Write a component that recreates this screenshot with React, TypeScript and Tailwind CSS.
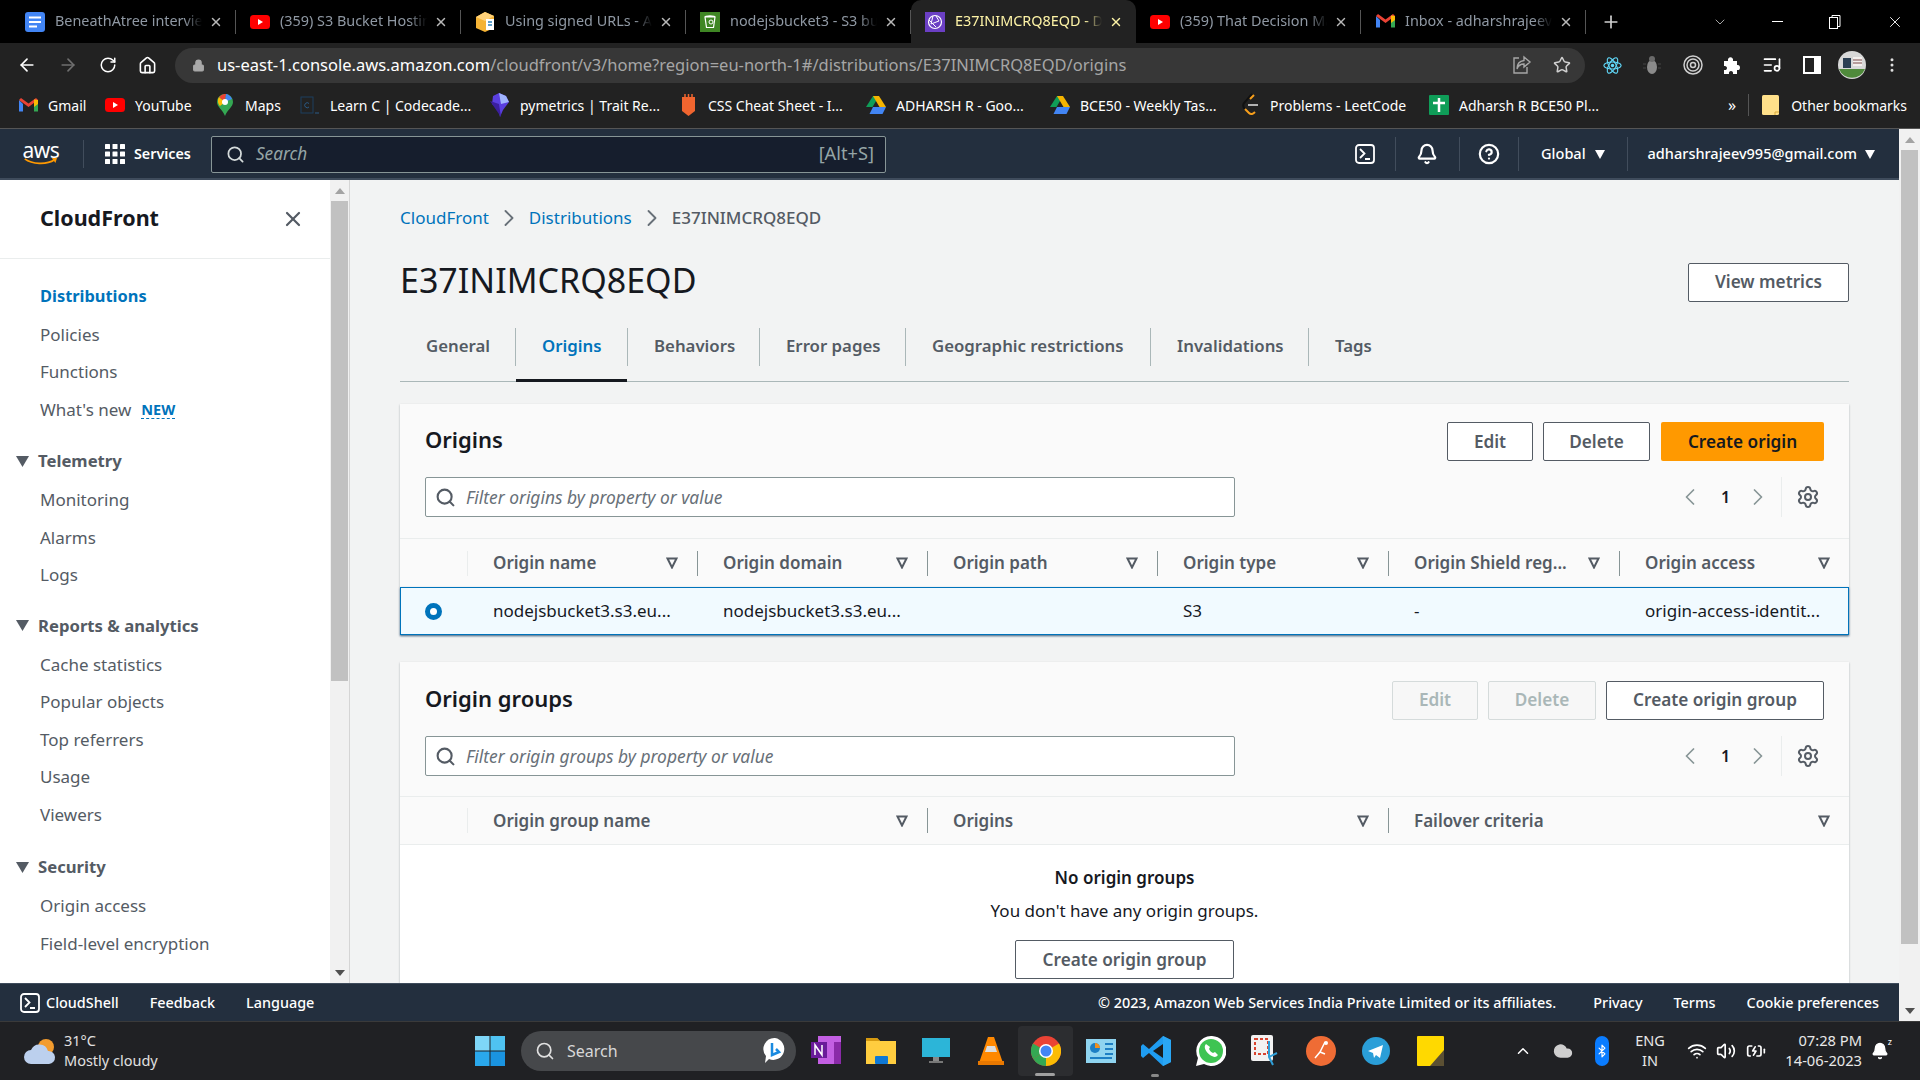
import React from "react";
import { ArrowLeft, ArrowRight, RotateCw, Home, Lock, Star, Bell, CircleHelp, X, ChevronLeft, ChevronRight, Plus, ChevronDown, ChevronUp, Search, Settings, Wifi, Volume2, Bluetooth, Cloud, BatteryCharging, MoreVertical, ListMusic } from "lucide-react";

const YT = () => (<svg width="20" height="14" viewBox="0 0 20 14"><rect width="20" height="14" rx="3.5" fill="#f00" /><path d="M8 4l5 3-5 3z" fill="#fff" /></svg>);
const GDoc = () => (<svg width="20" height="20" viewBox="0 0 20 20"><rect width="20" height="20" rx="3" fill="#4285f4" /><path d="M4 5.5h12M4 10h12M4 14.5h8" stroke="#fff" strokeWidth="2" /></svg>);
const Gmail = () => (<svg width="19" height="15" viewBox="0 0 19 15"><path d="M0 2v11.500h4V6z" fill="#4285f4" /><path d="M19 2v11.500h-4V6z" fill="#34a853" /><path d="M0 2l9.500 7L19 2l-2-2-7.500 5.500L2 0z" fill="#ea4335" /><path d="M15 1.500L19 2v4l-4 3z" fill="#fbbc04" /></svg>);
const S3Box = () => (<svg width="20" height="20" viewBox="0 0 20 20"><path d="M1 5l9-5 9 4v12l-9 4-9-4z" fill="#f5b335" /><path d="M1 5l9 4 9-5-9-4z" fill="#ffd27a" /><rect x="11" y="7" width="8" height="11" fill="#fff" /><path d="M13 10h4M13 13h4" stroke="#2a80b9" strokeWidth="1.500" /></svg>);
const S3Bucket = () => (<svg width="20" height="20" viewBox="0 0 20 20"><rect width="20" height="20" fill="#3f8624" /><path d="M5 5h10l-1.500 10.500h-7zM5 5c0-1.500 10-1.500 10 0" stroke="#fff" strokeWidth="1.200" fill="none" /><circle cx="11" cy="10" r="2" stroke="#fff" fill="none" /></svg>);
const CF = () => (<svg width="20" height="20" viewBox="0 0 20 20"><rect width="20" height="20" fill="#6b3fc4" /><circle cx="10" cy="10" r="6.500" stroke="#fff" fill="none" strokeWidth="1.200" /><path d="M4 8l7 7M8 4l-2 8 8-3-3-5" stroke="#fff" fill="none" /></svg>);
const Drive = () => (<svg width="20" height="18" viewBox="0 0 20 18"><path d="M7 0h6l-6.500 11H0z" fill="#0f9d58" /><path d="M7 0h6l7 11h-6.500z" fill="#f4b400" /><path d="M3.500 18L7 11h13l-3.500 7z" fill="#4285f4" /></svg>);
const Maps = () => (<svg width="16" height="22" viewBox="0 0 16 22"><path d="M8 0a8 8 0 0 1 8 8c0 5-6 8-8 14-2-6-8-9-8-14a8 8 0 0 1 8-8z" fill="#34a853" /><path d="M2 3l6 5-5 4C1 10 0 6 2 3z" fill="#fbbc04" /><path d="M2 3a8 8 0 0 1 7-3L8 8z" fill="#ea4335" /><path d="M9 0a8 8 0 0 1 6 5L8 8z" fill="#4285f4" /><circle cx="8" cy="8" r="3" fill="#fff" /></svg>);
const Cc = () => (<svg width="20" height="18" viewBox="0 0 20 18"><rect x="1" y="1" width="12" height="16" stroke="#1d3f5e" fill="none" /><path d="M9 7.500a2.500 2.500 0 1 0 0 3.500" stroke="#2a5a86" fill="none" /><path d="M15 17h4" stroke="#2a5a86" /></svg>);
const Pym = () => (<svg width="20" height="24" viewBox="0 0 20 24"><path d="M3 3l6-3 7 3 3 6-6 8-3 7-2-8-6-5z" fill="#5a3fe0" /><path d="M9 0l7 3 3 6-8 2z" fill="#a0b4ff" /><path d="M0 8l9 3 2 13z" fill="#3b1f9f" /></svg>);
const CssIc = () => (<svg width="17" height="22" viewBox="0 0 17 22"><path d="M2 3h13v14l-6.500 5L2 17z" fill="#f0652f" /><path d="M5 3V0M8.500 3V0M12 3V0" stroke="#f0652f" strokeWidth="1.500" /></svg>);
const Leet = () => (<svg width="18" height="24" viewBox="0 0 18 24"><path d="M11 1L3 10c-2 3 0 5 1 6" stroke="#111" strokeWidth="2" fill="none" /><path d="M4 16l4 4c2 2 4 1 6-1" stroke="#f89f1b" strokeWidth="2" fill="none" /><path d="M7 12h10" stroke="#b3b3b3" strokeWidth="2" /><path d="M9 6l4-4" stroke="#f89f1b" strokeWidth="2" /></svg>);
const Sheet = () => (<svg width="20" height="20" viewBox="0 0 20 20"><rect width="20" height="20" rx="1" fill="#0f9d58" /><path d="M10 3v14M4 8h12" stroke="#fff" strokeWidth="2.500" /></svg>);
const Folder = () => (<svg width="17" height="20" viewBox="0 0 17 20"><rect width="17" height="20" rx="1.500" fill="#ffe08a" /><path d="M13 20v-3h4" stroke="#d9a93a" fill="none" /></svg>);
const ShareIc = () => (<svg width="20" height="20" viewBox="0 0 20 20" fill="none" stroke="#a6a6a6" strokeWidth="1.400"><path d="M7 3H2v15h13v-6" /><path d="M12 2l6 5-6 5V9c-4 0-6 2-7 5 0-5 3-8 7-8.500z" /></svg>);
const React2 = () => (<svg width="19" height="19" viewBox="-11 -11 22 22"><g stroke="#61dafb" fill="none" strokeWidth="1.300"><ellipse rx="10" ry="4" /><ellipse rx="10" ry="4" transform="rotate(60)" /><ellipse rx="10" ry="4" transform="rotate(120)" /></g><circle r="2" fill="#61dafb" /></svg>);
const Bug = () => (<svg width="18" height="20" viewBox="0 0 18 20"><ellipse cx="9" cy="12" rx="5" ry="7" fill="#8b8b8b" /><circle cx="9" cy="4" r="3" fill="#6a6a6a" /><path d="M0 9h3M0 13h3M15 9h3M15 13h3" stroke="#444" /></svg>);
const Target = () => (<svg width="20" height="20" viewBox="0 0 20 20" fill="none" stroke="#cfcfcf"><circle cx="10" cy="10" r="9" strokeWidth="1.500" /><circle cx="10" cy="10" r="6" strokeWidth="1.500" /><circle cx="10" cy="10" r="2.500" strokeWidth="1.500" /></svg>);
const Side = () => (<svg width="18" height="18" viewBox="0 0 18 18"><rect width="18" height="18" fill="#fff" /><rect x="2" y="2" width="9" height="14" fill="#222" /></svg>);
const Avatar = () => (<svg width="28" height="28" viewBox="0 0 28 28"><circle cx="14" cy="14" r="14" fill="#d8d8d8" /><path d="M1 18h26a14 14 0 0 1-26 0z" fill="#4f8a3b" /><rect x="5" y="7" width="8" height="10" fill="#2a3e52" /><rect x="15" y="6" width="9" height="9" fill="#f4f0ee" /><path d="M15 9h9M15 12h9" stroke="#7a4a4a" /></svg>);
const PuzzleF = () => (<svg width="18" height="18" viewBox="0 0 18 18"><path d="M1 5h4c-1-5 6-5 5 0h4v4c4-1 4 6 0 5v4h-4c1-4-5-4-4 0H1v-4c4 1 4-5 0-4z" fill="#fff" /></svg>);
const Shell = ({ s = 20 }: { s?: number }) => (<svg width={s} height={s} viewBox="0 0 20 20" fill="none" stroke="#fff" strokeWidth="1.800"><rect x="1" y="1" width="18" height="18" rx="3" /><path d="M5 5l4.500 4.500L5 14M10 15h5" /></svg>);
const Grid = () => (<svg width="20" height="20" viewBox="0 0 20 20" fill="#fff">{[0, 7.5, 15].flatMap((x) => [0, 7.5, 15].map((y) => <rect key={`${x}-${y}`} x={x} y={y} width="5" height="5" rx="0.5" />))}</svg>);
const Aws = () => (
  <div className="flex flex-col items-center w-[38px] h-[26px] relative">
    <span className="text-white text-[21px] leading-[18px] font-['Noto_Sans'] tracking-[-0.5px]">aws</span>
    <svg width="38" height="10" viewBox="0 0 38 10" className="-mt-[1px]"><path d="M1 1c8 6 24 7 33 1" stroke="#f90" strokeWidth="2" fill="none" /><path d="M31 0l6-.5-2 6z" fill="#f90" /></svg>
  </div>
);
const Tri = ({ c = "#fff", w = 10, h = 9 }: { c?: string; w?: number; h?: number }) => (<svg width={w} height={h} viewBox="0 0 10 9" preserveAspectRatio="none"><path d="M0 0h10L5 9z" fill={c} /></svg>);
const FilterTri = () => (<svg width="12" height="12" viewBox="0 0 12 12"><path d="M1.500 1.500h9L6 10.500z" fill="none" stroke="#545b64" strokeWidth="2" /></svg>);

const tabs: { icon: React.ReactNode; t: string; active?: boolean }[] = [
  { icon: <GDoc />, t: "BeneathAtree interview" },
  { icon: <YT />, t: "(359) S3 Bucket Hosting" },
  { icon: <S3Box />, t: "Using signed URLs - Amazon" },
  { icon: <S3Bucket />, t: "nodejsbucket3 - S3 bucket" },
  { icon: <CF />, t: "E37INIMCRQ8EQD - Distribution", active: true },
  { icon: <YT />, t: "(359) That Decision Made" },
  { icon: <Gmail />, t: "Inbox - adharshrajeev995" },
];

const ChromeTab = ({ icon, t, active }: { icon: React.ReactNode; t: string; active?: boolean }) => (
  <div className={`w-[225px] h-[43px] flex items-center pl-[14px] shrink-0 ${active ? "bg-[#222222] rounded-t-[10px]" : ""}`}>
    <div className="w-5 flex justify-center shrink-0">{icon}</div>
    <div className={`ml-[10px] mb-[2px] w-[147px] text-[14.4px] whitespace-nowrap overflow-hidden [mask-image:linear-gradient(to_right,black_88%,transparent)] ${active ? "text-[#fdf3a6]" : "text-[#8f98a3]"}`}>{t}</div>
    <X size={14} strokeWidth={2.5} className={`ml-[7px] shrink-0 ${active ? "text-[#fdf3a6]" : "text-[#b8b8b8]"}`} />
    {!active && <div className="ml-[12px] w-px h-[24px] bg-[#555]" />}
  </div>
);

const bookmarks: { icon: React.ReactNode; t: string; w: string }[] = [
  { icon: <Gmail />, t: "Gmail", w: "w-[87px]" },
  { icon: <YT />, t: "YouTube", w: "w-[110px]" },
  { icon: <Maps />, t: "Maps", w: "w-[85px]" },
  { icon: <Cc />, t: "Learn C | Codecade...", w: "w-[190px]" },
  { icon: <Pym />, t: "pymetrics | Trait Re...", w: "w-[188px]" },
  { icon: <CssIc />, t: "CSS Cheat Sheet - I...", w: "w-[188px]" },
  { icon: <Drive />, t: "ADHARSH R - Goo...", w: "w-[184px]" },
  { icon: <Drive />, t: "BCE50 - Weekly Tas...", w: "w-[190px]" },
  { icon: <Leet />, t: "Problems - LeetCode", w: "w-[189px]" },
  { icon: <Sheet />, t: "Adharsh R BCE50 Pl...", w: "w-[290px]" },
];

const NavItem = ({ t, active, badge }: { t: string; active?: boolean; badge?: boolean }) => (
  <div className={`h-[37.5px] flex items-center pl-[40px] ${active ? "text-[16.4px] font-bold text-[#0073bb]" : "text-[17px] text-[#545b64]"}`}>
    {t}
    {badge && <span className="ml-[10px] text-[14.5px] font-bold text-[#0073bb] border-b border-dashed border-[#0073bb] leading-[18px]">NEW</span>}
  </div>
);
const NavHead = ({ t, cls }: { t: string; cls: string }) => (
  <div className={`flex items-center h-[40px] pl-[16px] text-[16.7px] font-bold text-[#545b64] ${cls}`}>
    <Tri c="#545b64" w={13} h={11} />
    <span className="ml-[9px]">{t}</span>
  </div>
);

const Scrollbar = ({ thumb }: { thumb: string }) => (
  <div className="w-full h-full bg-[#f1f1f1] flex flex-col items-center">
    <div className="h-[21px] flex items-center justify-center shrink-0"><svg width="10" height="6" viewBox="0 0 10 6"><path d="M5 0l5 6H0z" fill="#a3a3a3" /></svg></div>
    <div className={`w-[17px] bg-[#c1c1c1] ${thumb}`} />
    <div className="flex-1" />
    <div className="h-[21px] flex items-center justify-center shrink-0"><svg width="10" height="6" viewBox="0 0 10 6"><path d="M5 6l5-6H0z" fill="#505050" /></svg></div>
  </div>
);

const Btn = ({ t, w, kind = "normal" }: { t: string; w: string; kind?: "normal" | "primary" | "disabled" }) => (
  <div className={`h-[39px] ${w} rounded-[2px] flex items-center justify-center text-[17.2px] font-semibold shrink-0 ${kind === "primary" ? "bg-[#ff9900] text-[#16191f]" : kind === "disabled" ? "bg-[#f7f7f7] border border-[#d5dbdb] text-[#aab7b8]" : "bg-white border border-[#545b64] text-[#545b64]"}`}>{t}</div>
);

const FilterRow = ({ placeholder }: { placeholder: string }) => (
  <div className="flex items-center px-[25px]">
    <div className="w-[810px] h-[40px] bg-white border border-[#879596] rounded-[2px] flex items-center pl-[9px]">
      <Search size={21} strokeWidth={2.4} className="text-[#545b64]" />
      <span className="ml-[10px] text-[17.4px] italic text-[#687078]">{placeholder}</span>
    </div>
    <div className="flex-1" />
    <ChevronLeft size={28} strokeWidth={1.5} className="text-[#879596] mr-[17px]" />
    <span className="text-[16px] font-semibold text-[#16191f] w-[8px] text-center">1</span>
    <ChevronRight size={28} strokeWidth={1.5} className="text-[#879596] ml-[15px]" />
    <div className="w-px h-[40px] bg-[#eaeded] ml-[9px]" />
    <Settings size={24} strokeWidth={2} className="text-[#545b64] ml-[14px] mr-[4px]" />
  </div>
);

const Th = ({ t, w, sep = true }: { t: string; w: string; sep?: boolean }) => (
  <div className={`${w} shrink-0 flex items-center h-[25px] pl-[25px] ${sep ? "border-r border-[#879596]" : ""}`}>
    <span className="flex-1 text-[17px] font-semibold text-[#545b64] whitespace-nowrap">{t}</span>
    <span className="mr-[19px] flex"><FilterTri /></span>
  </div>
);

const Td = ({ t, w }: { t: string; w: string }) => (
  <div className={`${w} shrink-0 pl-[25px] text-[17px] text-[#16191f] whitespace-nowrap`}>{t}</div>
);

const taskIcons: React.ReactNode[] = [
  <svg key="on" width="30" height="30" viewBox="0 0 30 30"><rect x="7" width="23" height="28" fill="#c35fe3" /><rect x="23" y="6" width="7" height="22" fill="#8a2aa8" /><rect y="6" width="16" height="16" fill="#6a1b9a" /><path d="M4 19V9l7 10V9" stroke="#fff" strokeWidth="1.500" fill="none" /></svg>,
  <svg key="ex" width="30" height="30" viewBox="0 0 30 30"><path d="M0 2h11l3 3h16v23H0z" fill="#ffcd3f" /><path d="M0 2h11l3 3H0z" fill="#d69a10" /><rect x="9" y="20" width="13" height="8" rx="1" fill="#0f78d4" /></svg>,
  <svg key="mo" width="28" height="26" viewBox="0 0 28 26"><rect width="28" height="19" fill="#2cb5d8" /><rect x="11" y="19" width="6" height="4" fill="#888" /><rect x="7" y="23" width="14" height="2" fill="#777" /></svg>,
  <svg key="vl" width="26" height="28" viewBox="0 0 26 28"><path d="M10 0h6l9 26H1z" fill="#ff8800" /><path d="M9 9h8l2 6H7z" fill="#ddd" /><path d="M0 24h26v4H0z" fill="#e87800" /></svg>,
  <svg key="ch" width="30" height="30" viewBox="0 0 30 30"><circle cx="15" cy="15" r="15" fill="#ea4335" /><path d="M15 15L2 22.500A15 15 0 0 1 2 7.500z" fill="#34a853" /><path d="M15 15l-13 7.500A15 15 0 0 0 15 30z" fill="#34a853" /><path d="M15 15l13-7.500A15 15 0 0 1 15 30z" fill="#fbbc04" /><circle cx="15" cy="15" r="7" fill="#fff" /><circle cx="15" cy="15" r="5.500" fill="#4285f4" /></svg>,
  <svg key="cp" width="30" height="24" viewBox="0 0 30 24"><rect width="30" height="24" fill="#8fd4f0" /><circle cx="9" cy="9" r="5" fill="#1d7fc4" /><path d="M9 4v5h5a5 5 0 0 0-5-5z" fill="#f09020" /><path d="M19 5h8M19 10h8M19 15h8M4 19h22" stroke="#1d7fc4" strokeWidth="2" /></svg>,
  <svg key="vs" width="30" height="30" viewBox="0 0 30 30"><path d="M22 0l8 4v22l-8 4-14-13-6 5-2-2v-10l2-2 6 5z" fill="#1f9cf0" /><path d="M22 8v14l-10-7z" fill="#1c1c1c" /><path d="M22 0v30l8-4V4z" fill="#2aa7f5" /></svg>,
  <svg key="wa" width="30" height="30" viewBox="0 0 30 30"><path d="M15 0a15 15 0 1 1-7 28L0 30l2-8A15 15 0 0 1 15 0z" fill="#fff" /><circle cx="15" cy="15" r="12" fill="#3ec452" /><path d="M10 8c-3 3 0 8 4 11 3 2 6 3 8 0l-3-3-2 1c-2-1-3-2-4-4l1-2z" fill="#fff" /></svg>,
  <svg key="sn" width="30" height="32" viewBox="0 0 30 32"><rect width="22" height="26" rx="2" fill="#f2f2f2" /><rect x="4" y="4" width="13" height="15" fill="none" stroke="#d8432f" strokeWidth="2" strokeDasharray="3 2" /><path d="M18 6v16l4 8M18 22l8-4" stroke="#2f9fd8" strokeWidth="2" fill="none" /></svg>,
  <svg key="pm" width="30" height="30" viewBox="0 0 30 30"><circle cx="15" cy="15" r="15" fill="#ef6c35" /><path d="M19 6l-5 10-5 6M14 16l5 2" stroke="#fff" strokeWidth="1.500" fill="none" /><circle cx="20" cy="7" r="2" fill="#fff" /></svg>,
  <svg key="tg" width="28" height="28" viewBox="0 0 28 28"><circle cx="14" cy="14" r="14" fill="#2a9ed8" /><path d="M6 14l15-6-3 13-4-3-2 3-1-5z" fill="#fff" /></svg>,
  <svg key="st" width="27" height="30" viewBox="0 0 27 30"><rect width="27" height="30" rx="1" fill="#ffd900" /><path d="M27 14v16H13z" fill="#5b5033" /></svg>,
];

export default function App() {
  return (
    <div className="w-[1920px] h-[1080px] overflow-hidden flex flex-col font-['Noto_Sans',sans-serif] bg-[#f2f3f3]">
      {/* tabs */}
      <div className="h-[43px] bg-black flex items-center pl-[11px] shrink-0">
        {tabs.map((x, i) => <ChromeTab key={i} icon={x.icon} t={x.t} active={x.active} />)}
        <Plus size={20} strokeWidth={2} className="text-[#d0d0d0] ml-[15px]" />
        <ChevronDown size={16} strokeWidth={1.2} className="text-[#cfcfcf] ml-[91px]" />
        <div className="w-[11px] h-px bg-white ml-[44px]" />
        <svg width="14" height="14" viewBox="0 0 14 14" fill="none" stroke="#fff" className="ml-[44px]"><rect x="2.5" y="2.5" width="8" height="11" /><path d="M5 2.500V.500h8v11h-2" /></svg>
        <X size={18} strokeWidth={1.2} className="text-white ml-[45px]" />
      </div>
      {/* toolbar */}
      <div className="h-[44px] bg-[#222222] flex items-center shrink-0">
        <ArrowLeft size={20} strokeWidth={2} className="text-white ml-[17px]" />
        <ArrowRight size={20} strokeWidth={2} className="text-[#6f6f6f] ml-[21px]" />
        <RotateCw size={18} strokeWidth={2} className="text-white ml-[21px]" />
        <Home size={19} strokeWidth={2} className="text-white ml-[21px]" />
        <div className="ml-[18px] w-[1410px] h-[35px] bg-[#373737] rounded-full flex items-center pl-[17px]">
          <Lock size={13} fill="#a8a8a8" className="text-[#a8a8a8]" />
          <span className="ml-[12px] text-[16.5px] text-[#a6a6a6] whitespace-nowrap"><span className="text-white">us-east-1.console.aws.amazon.com</span>/cloudfront/v3/home?region=eu-north-1#/distributions/E37INIMCRQ8EQD/origins</span>
          <div className="flex-1" />
          <ShareIc />
          <Star size={18} strokeWidth={2} className="text-[#d0d0d0] ml-[21px] mr-[14px]" />
        </div>
        <div className="w-[17px]" />
        <div className="w-[20px] flex justify-center"><React2 /></div>
        <div className="w-[20px] flex justify-center ml-[20px]"><Bug /></div>
        <div className="w-[20px] flex justify-center ml-[21px]"><Target /></div>
        <div className="w-[20px] flex justify-center ml-[19px]"><PuzzleF /></div>
        <div className="w-[20px] flex justify-center ml-[20px]"><ListMusic size={20} className="text-white" /></div>
        <div className="w-[20px] flex justify-center ml-[20px]"><Side /></div>
        <div className="w-[28px] flex justify-center ml-[16px]"><Avatar /></div>
        <MoreVertical size={18} className="text-[#e0e0e0] ml-[17px]" />
      </div>
      {/* bookmarks */}
      <div className="h-[42px] bg-[#222222] border-b border-[#555] flex items-center pl-[18px] pb-[5px] shrink-0">
        {bookmarks.map((b, i) => (
          <div key={i} className={`${b.w} flex items-center shrink-0`}>
            <div className="w-5 flex justify-center shrink-0">{b.icon}</div>
            <span className="ml-[10px] text-[14px] text-white whitespace-nowrap">{b.t}</span>
          </div>
        ))}
        <span className="text-white text-[16px] ml-[9px]">»</span>
        <div className="w-px h-[22px] bg-[#555] ml-[12px]" />
        <div className="ml-[13px]"><Folder /></div>
        <span className="ml-[12px] text-[14px] text-white whitespace-nowrap">Other bookmarks</span>
      </div>
      {/* page */}
      <div className="h-[892px] flex shrink-0">
        <div className="w-[1899px] flex flex-col shrink-0">
          {/* aws nav */}
          <div className="h-[51px] bg-[#232f3e] border-b-2 border-[#3f4c5c] flex items-center pt-[1px] shrink-0 text-white">
            <div className="ml-[22px]"><Aws /></div>
            <div className="w-px h-[28px] bg-[#414d5c] ml-[23px]" />
            <div className="ml-[21px]"><Grid /></div>
            <span className="ml-[9px] text-[14.3px] font-semibold">Services</span>
            <div className="ml-[20px] w-[675px] h-[37px] bg-[#161e2d] border border-[#879596] rounded-[2px] flex items-center pl-[14px] pr-[11px]">
              <Search size={19} strokeWidth={2.2} className="text-[#d5dbdb]" />
              <span className="ml-[11px] italic text-[#95a5a6] text-[17.2px]">Search</span>
              <div className="flex-1" />
              <span className="text-[#95a5a6] text-[18.2px]">[Alt+S]</span>
            </div>
            <div className="flex-1" />
            <Shell />
            <div className="w-px h-[34px] bg-[#414d5c] ml-[20px]" />
            <Bell size={22} strokeWidth={2.4} className="ml-[20px]" />
            <div className="w-px h-[34px] bg-[#414d5c] ml-[21px]" />
            <CircleHelp size={22} strokeWidth={2.4} className="ml-[18px]" />
            <div className="w-px h-[34px] bg-[#414d5c] ml-[18px]" />
            <span className="ml-[22px] text-[14.5px] font-medium">Global</span>
            <span className="ml-[9px]"><Tri /></span>
            <div className="w-px h-[34px] bg-[#414d5c] ml-[22px]" />
            <span className="ml-[20px] text-[14.5px] font-medium">adharshrajeev995@gmail.com</span>
            <span className="ml-[8px] mr-[24px]"><Tri /></span>
          </div>
          {/* body */}
          <div className="h-[803px] flex overflow-hidden shrink-0">
            <div className="w-[330px] bg-white shrink-0 flex flex-col overflow-hidden">
              <div className="h-[79px] border-b border-[#eaeded] flex items-center pl-[40px] pr-[25px] shrink-0">
                <span className="text-[21.5px] font-bold text-[#16191f] flex-1 mb-[2px]">CloudFront</span>
                <X size={24} strokeWidth={2.2} className="text-[#545b64]" />
              </div>
              <div className="pt-[19px]">
                <NavItem t="Distributions" active />
                <NavItem t="Policies" />
                <NavItem t="Functions" />
                <NavItem t="What's new" badge />
                <NavHead t="Telemetry" cls="mt-[13px]" />
                <NavItem t="Monitoring" />
                <NavItem t="Alarms" />
                <NavItem t="Logs" />
                <NavHead t="Reports & analytics" cls="mt-[12px]" />
                <NavItem t="Cache statistics" />
                <NavItem t="Popular objects" />
                <NavItem t="Top referrers" />
                <NavItem t="Usage" />
                <NavItem t="Viewers" />
                <NavHead t="Security" cls="mt-[14px]" />
                <NavItem t="Origin access" />
                <NavItem t="Field-level encryption" />
              </div>
            </div>
            <div className="w-[20px] shrink-0 border-r border-[#d5d5d5]"><Scrollbar thumb="h-[480px]" /></div>
            <div className="flex-1 pl-[50px] pr-[50px] flex flex-col min-w-0">
              <div className="h-[76px] flex items-center text-[17px] shrink-0">
                <span className="text-[#0073bb]">CloudFront</span>
                <ChevronRight size={28} strokeWidth={1.6} className="text-[#687078] mx-[6px]" />
                <span className="text-[#0073bb]">Distributions</span>
                <ChevronRight size={28} strokeWidth={1.6} className="text-[#687078] mx-[6px]" />
                <span className="text-[#545b64] font-medium">E37INIMCRQ8EQD</span>
              </div>
              <div className="h-[52px] flex items-center justify-between shrink-0">
                <span className="text-[34px] text-[#16191f] leading-[40px] mb-[5px]">E37INIMCRQ8EQD</span>
                <Btn t="View metrics" w="w-[161px]" />
              </div>
              {/* tabs */}
              <div className="mt-[20px] h-[54px] border-b border-[#aab7b8] flex items-start shrink-0 relative">
                {[
                  { t: "General", w: "w-[116px]" },
                  { t: "Origins", w: "w-[112px]", a: true },
                  { t: "Behaviors", w: "w-[132px]" },
                  { t: "Error pages", w: "w-[146px]" },
                  { t: "Geographic restrictions", w: "w-[245px]" },
                  { t: "Invalidations", w: "w-[158px]" },
                  { t: "Tags", w: "w-[80px]", last: true },
                ].map((x, i) => (
                  <div key={i} className={`${x.w} h-[38px] flex items-center pl-[26px] shrink-0 relative ${x.last ? "" : "border-r border-[#aab7b8]"}`}>
                    <span className={`text-[16.8px] font-semibold whitespace-nowrap mb-[2px] ${x.a ? "text-[#0073bb]" : "text-[#545b64]"}`}>{x.t}</span>
                    {x.a && <div className="absolute left-0 right-0 top-[51px] h-[3px] bg-[#16191f]" />}
                  </div>
                ))}
              </div>
              {/* card 1 */}
              <div className="mt-[22px] bg-[#fafafa] shadow-[0_1px_2px_rgba(0,28,36,0.3)] shrink-0">
                <div className="h-[73px] flex items-center px-[25px] pt-[2px]">
                  <span className="text-[22px] font-semibold text-[#16191f] flex-1 mb-[4px]">Origins</span>
                  <Btn t="Edit" w="w-[86px]" />
                  <div className="w-[10px]" />
                  <Btn t="Delete" w="w-[107px]" />
                  <div className="w-[11px]" />
                  <Btn t="Create origin" w="w-[163px]" kind="primary" />
                </div>
                <FilterRow placeholder="Filter origins by property or value" />
                <div className="h-[21px]" />
                <div className="h-[49px] border-t border-[#eaeded] flex items-center">
                  <div className="w-[68px] h-[25px] border-r border-[#eaeded] shrink-0" />
                  <Th t="Origin name" w="w-[230px]" />
                  <Th t="Origin domain" w="w-[230px]" />
                  <Th t="Origin path" w="w-[230px]" />
                  <Th t="Origin type" w="w-[231px]" />
                  <Th t="Origin Shield reg..." w="w-[231px]" />
                  <Th t="Origin access" w="w-[229px]" sep={false} />
                </div>
                <div className="h-[48px] bg-[#f1faff] border border-[#0073bb] shadow-[0_1px_2px_rgba(0,60,110,0.6)] flex items-center">
                  <div className="w-[67px] shrink-0 pl-[24px]"><div className="w-[17px] h-[17px] rounded-full border-[5px] border-[#0073bb] bg-white" /></div>
                  <Td t="nodejsbucket3.s3.eu..." w="w-[230px]" />
                  <Td t="nodejsbucket3.s3.eu..." w="w-[230px]" />
                  <Td t="" w="w-[230px]" />
                  <Td t="S3" w="w-[231px]" />
                  <Td t="-" w="w-[231px]" />
                  <Td t="origin-access-identit..." w="w-[228px]" />
                </div>
              </div>
              {/* card 2 */}
              <div className="mt-[27px] bg-white shadow-[0_1px_2px_rgba(0,28,36,0.3)] pb-[40px] shrink-0">
                <div className="bg-[#fafafa]">
                  <div className="h-[74px] flex items-center px-[25px] pt-[2px]">
                    <span className="text-[22px] font-semibold text-[#16191f] flex-1 mb-[4px]">Origin groups</span>
                    <Btn t="Edit" w="w-[86px]" kind="disabled" />
                    <div className="w-[10px]" />
                    <Btn t="Delete" w="w-[108px]" kind="disabled" />
                    <div className="w-[10px]" />
                    <Btn t="Create origin group" w="w-[218px]" />
                  </div>
                  <FilterRow placeholder="Filter origin groups by property or value" />
                  <div className="h-[20px]" />
                  <div className="h-[49px] border-y border-[#eaeded] flex items-center">
                    <div className="w-[68px] h-[25px] border-r border-[#eaeded] shrink-0" />
                    <Th t="Origin group name" w="w-[460px]" />
                    <Th t="Origins" w="w-[461px]" />
                    <Th t="Failover criteria" w="w-[460px]" sep={false} />
                  </div>
                </div>
                <div className="flex flex-col items-center pt-[21px]">
                  <span className="text-[17px] font-semibold text-[#16191f] leading-[24px]">No origin groups</span>
                  <span className="text-[17px] text-[#16191f] leading-[24px] mt-[9px]">You don't have any origin groups.</span>
                  <div className="mt-[17px]"><Btn t="Create origin group" w="w-[219px]" /></div>
                </div>
              </div>
            </div>
          </div>
          {/* footer */}
          <div className="h-[38px] bg-[#232f3e] border-t border-[#3f4c5c] flex items-center text-white text-[14.4px] font-medium shrink-0">
            <div className="ml-[20px]"><Shell /></div>
            <span className="ml-[6px]">CloudShell</span>
            <span className="ml-[31px]">Feedback</span>
            <span className="ml-[31px]">Language</span>
            <div className="flex-1" />
            <span>© 2023, Amazon Web Services India Private Limited or its affiliates.</span>
            <span className="ml-[37px]">Privacy</span>
            <span className="ml-[31px]">Terms</span>
            <span className="ml-[31px] mr-[20px]">Cookie preferences</span>
          </div>
        </div>
        <div className="flex-1"><Scrollbar thumb="h-[794px]" /></div>
      </div>
      {/* taskbar */}
      <div className="h-[59px] bg-[#202124] border-t border-[#3a3a3a] flex items-center text-white shrink-0">
        <svg width="34" height="30" viewBox="0 0 34 30" className="ml-[23px]"><circle cx="23" cy="11" r="8" fill="#f39c2e" /><path d="M8 28a7 7 0 0 1 0-14 9 9 0 0 1 17 1 6.500 6.500 0 0 1 1 13z" fill="#bcd0ee" /></svg>
        <div className="ml-[7px] mb-[2px] w-[120px] flex flex-col text-[14.5px] leading-[20px] text-[#e0e0e0]">
          <span>31°C</span>
          <span>Mostly cloudy</span>
        </div>
        <svg width="30" height="30" viewBox="0 0 30 30" className="ml-[291px]"><rect width="14.5" height="14.5" fill="#7ed6f7" /><rect x="15.5" width="14.5" height="14.5" fill="#4fc3f2" /><rect y="15.5" width="14.5" height="14.5" fill="#2aa8ec" /><rect x="15.5" y="15.5" width="14.5" height="14.5" fill="#1a94e0" /></svg>
        <div className="ml-[16px] w-[275px] h-[40px] bg-[#46484b] rounded-full flex items-center pl-[14px] shrink-0">
          <Search size={20} strokeWidth={2} className="text-[#e0e0e0]" />
          <span className="ml-[12px] text-[16px] text-[#d8d8d8]">Search</span>
          <div className="flex-1" />
          <svg width="24" height="28" viewBox="0 0 24 28" className="mr-[9px]"><path d="M12 1a11 11 0 1 1-6 21l-4 4 1-7A11 11 0 0 1 12 1z" fill="#fff" /><path d="M9 6v12l7-3-3-3" stroke="#1a8ae0" strokeWidth="2.5" fill="none" /></svg>
        </div>
        <div className="ml-[2px] flex shrink-0">
          {taskIcons.map((ic, i) => (
            <div key={i} className={`w-[55px] h-[50px] flex items-center justify-center relative rounded-[4px] ${i === 4 ? "bg-[#2c2d30]" : ""}`}>
              {ic}
              {i === 4 && <div className="absolute bottom-0 left-[17px] w-[20px] h-[3px] rounded bg-[#a0a0a0]" />}
              {i === 6 && <div className="absolute -bottom-[1px] left-[23px] w-[8px] h-[3px] rounded bg-[#888]" />}
            </div>
          ))}
        </div>
        <ChevronUp size={18} strokeWidth={2} className="ml-[56px] text-white" />
        <Cloud size={20} fill="#cfcfcf" className="ml-[21px] text-[#cfcfcf]" />
        <div className="ml-[22px] w-[14px] h-[30px] rounded-full bg-[#0a7cff] flex items-center justify-center"><Bluetooth size={14} className="text-white" /></div>
        <div className="ml-[26px] mb-[2px] flex flex-col items-center text-[14.5px] leading-[20px] text-[#e8e8e8] w-[30px]">
          <span>ENG</span>
          <span>IN</span>
        </div>
        <Wifi size={20} className="ml-[22px]" />
        <Volume2 size={20} className="ml-[9px]" />
        <BatteryCharging size={20} className="ml-[10px]" />
        <div className="ml-[18px] mb-[2px] flex flex-col items-end text-[14.7px] leading-[20px] text-[#e8e8e8] w-[78px]">
          <span>07:28 PM</span>
          <span>14-06-2023</span>
        </div>
        <div className="ml-[9px] flex items-start relative">
          <Bell size={18} fill="#fff" />
          <span className="absolute -right-[3px] -top-[5px] text-[9px] leading-[10px]">z</span>
        </div>
      </div>
    </div>
  );
}
